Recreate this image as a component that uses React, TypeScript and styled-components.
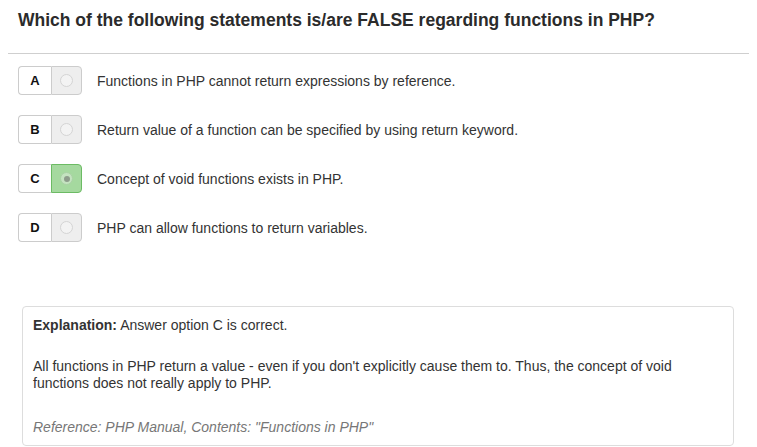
import React from 'react';
import styled, { createGlobalStyle } from 'styled-components';

const GlobalStyle = createGlobalStyle`
  body {
    margin: 8px;
    background: #fff;
    font-family: "Liberation Sans", Arial, sans-serif;
    color: #333;
  }
`;

const Page = styled.div`
  width: 741px;
`;

const Title = styled.h3`
  margin: 0;
  padding: 2px 10px 0;
  font-size: 17.5px;
  line-height: 20px;
  font-weight: bold;
  color: #2b2b2b;
`;

const Divider = styled.hr`
  margin: 23px 0 12px;
  border: 0;
  border-top: 1px solid #cfcfcf;
`;

const OptionList = styled.div`
  display: flex;
  flex-direction: column;
  gap: 20px;
  padding-left: 10px;
`;

const OptionRow = styled.div`
  display: flex;
  align-items: center;
  gap: 15px;
`;

const ButtonGroup = styled.div`
  display: flex;
  height: 29px;
`;

const LetterCell = styled.span`
  width: 32px;
  display: flex;
  align-items: center;
  justify-content: center;
  border: 1px solid #ccc;
  border-right: 0;
  border-radius: 4px 0 0 4px;
  background: #fff;
  font-size: 13px;
  font-weight: bold;
  color: #111;
`;

const RadioCell = styled.span<{ $selected?: boolean }>`
  width: 29px;
  display: flex;
  align-items: center;
  justify-content: center;
  border: 1px solid ${(p) => (p.$selected ? '#6cbb64' : '#ccc')};
  border-radius: 0 4px 4px 0;
  background: ${(p) => (p.$selected ? '#a5d99f' : '#eee')};
`;

const Radio = styled.span<{ $selected?: boolean }>`
  width: 13px;
  height: 13px;
  box-sizing: border-box;
  border-radius: 50%;
  border: 1px solid ${(p) => (p.$selected ? '#a9d2a4' : '#d4d4d4')};
  background: ${(p) => (p.$selected ? '#c4e3c0' : '#f3f3f3')};
  display: flex;
  align-items: center;
  justify-content: center;

  &::after {
    content: '';
    display: ${(p) => (p.$selected ? 'block' : 'none')};
    width: 6px;
    height: 6px;
    border-radius: 50%;
    background: #8d9c8b;
  }
`;

const OptionText = styled.span`
  font-size: 14px;
  padding-top: 1px;
  color: #333;
`;

const ExplanationBox = styled.div`
  margin: 64px 15px 0 14px;
  padding: 10px 10px 9px;
  border: 1px solid #ddd;
  border-radius: 4px;
  font-size: 14px;
  line-height: 17px;
  color: #333;

  p {
    margin: 0;
  }
`;

const BodyText = styled.p`
  && {
    margin-top: 24px;
  }
`;

const RefLine = styled.p`
  font-style: italic;
  color: #777;

  && {
    margin-top: 27px;
  }
`;

const options = [
  { letter: 'A', text: 'Functions in PHP cannot return expressions by reference.' },
  { letter: 'B', text: 'Return value of a function can be specified by using return keyword.' },
  { letter: 'C', text: 'Concept of void functions exists in PHP.', selected: true },
  { letter: 'D', text: 'PHP can allow functions to return variables.' },
];

const App: React.FC = () => {
  return (
    <Page>
      <GlobalStyle />
      <Title>Which of the following statements is/are FALSE regarding functions in PHP?</Title>
      <Divider />
      <OptionList>
        {options.map((o) => (
          <OptionRow key={o.letter}>
            <ButtonGroup>
              <LetterCell>{o.letter}</LetterCell>
              <RadioCell $selected={o.selected}>
                <Radio $selected={o.selected} />
              </RadioCell>
            </ButtonGroup>
            <OptionText>{o.text}</OptionText>
          </OptionRow>
        ))}
      </OptionList>
      <ExplanationBox>
        <p><b>Explanation:</b> Answer option C is correct.</p>
        <BodyText>
          All functions in PHP return a value - even if you don't explicitly cause them to. Thus, the concept of void
          functions does not really apply to PHP.
        </BodyText>
        <RefLine>Reference: PHP Manual, Contents: "Functions in PHP"</RefLine>
      </ExplanationBox>
    </Page>
  );
};

export default App;
